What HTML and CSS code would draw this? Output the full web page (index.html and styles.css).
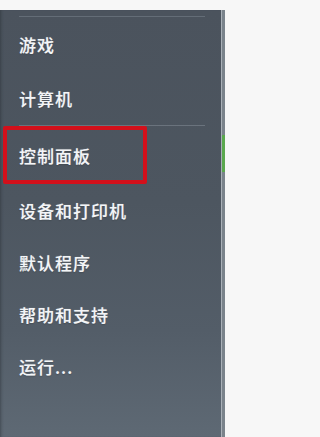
FILE: index.html
```html
<!DOCTYPE html>
<html lang="zh-CN">
<head>
<meta charset="utf-8">
<title>开始菜单</title>
<link rel="stylesheet" href="styles.css">
</head>
<body>
<div class="menu">
  <div class="panel">
    <div class="sep sep-top"></div>
    <div class="item">游戏</div>
    <div class="item">计算机</div>
    <div class="sep"></div>
    <div class="item item-marked">控制面板</div>
    <div class="item item-low">设备和打印机</div>
    <div class="item item-low">默认程序</div>
    <div class="item item-low">帮助和支持</div>
    <div class="item item-low">运行...</div>
  </div>
  <div class="edge"><div class="edge-glow"></div></div>
</div>
</body>
</html>
```

FILE: styles.css
```css
html, body {
  margin: 0;
  padding: 0;
  background: #f7f7f7;
}

body {
  width: 232px;
  height: 437px;
  overflow: hidden;
  font-family: "Noto Sans CJK SC", "Noto Sans", sans-serif;
}

.menu {
  margin-top: 10px;
  width: 225px;
  height: 427px;
  display: flex;
}

.panel {
  flex: 1;
  padding-top: 6px;
  background: linear-gradient(180deg, #4b535d 0%, #4d5660 45%, #535d68 75%, #5e6974 100%);
  box-shadow: inset 3px 0 3px -2px rgba(40, 45, 52, 0.5);
}

.sep {
  height: 1px;
  margin-left: 19px;
  width: 186px;
  background: #6a737d;
}

.sep-top {
  background: #646d77;
}

.item {
  height: 54px;
  display: flex;
  align-items: center;
  padding-left: 19px;
  color: #f3f5f7;
  font-size: 17px;
  font-weight: 500;
  letter-spacing: 1px;
  text-shadow: 0 0 1px rgba(255, 255, 255, 0.45), 0 1px 1px rgba(30, 34, 40, 0.35);
}

.item-marked {
  box-sizing: border-box;
  height: 58px;
  width: 144px;
  margin-left: 3px;
  padding-left: 12px;
  border: 4px solid #d3101b;
  border-radius: 2px;
}

.item-low {
  height: 52px;
}

.edge {
  position: relative;
  width: 3px;
  border-left: 1px solid #a9b0b7;
  background: #7a838b;
}

.edge-glow {
  position: absolute;
  left: 0;
  top: 125px;
  width: 3px;
  height: 37px;
  background: #5aa84e;
}
```
